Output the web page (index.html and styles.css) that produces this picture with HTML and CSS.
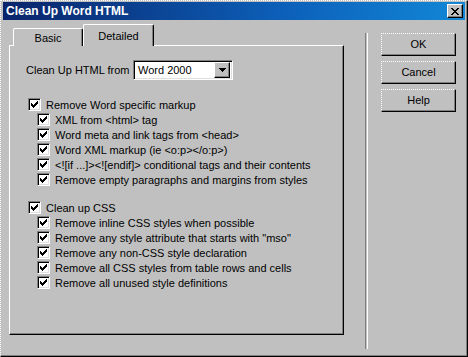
FILE: index.html
```html
<!DOCTYPE html>
<html>

<head>
    <title>Clean Up Word HTML</title>
    <link rel="stylesheet" href="styles.css">
</head>

<body>
    <div class="window">
        <div class="titlebar">
            <span class="title">Clean Up Word HTML</span>
            <span class="close raised">
                <svg width="8" height="7" viewBox="0 0 8 7" shape-rendering="crispEdges">
                    <path d="M0 0h2v1H0z M6 0h2v1H6z M1 1h2v1H1z M5 1h2v1H5z M2 2h4v1H2z M3 3h2v1H3z M2 4h4v1H2z M1 5h2v1H1z M5 5h2v1H5z M0 6h2v1H0z M6 6h2v1H6z" fill="#000"/>
                </svg>
            </span>
        </div>

        <div class="content">
            <div class="left">
                <div class="tabs">
                    <div class="tab">Basic</div>
                    <div class="tab active">Detailed</div>
                </div>
                <div class="panel">
                    <div class="from-row">
                        <span class="from-label">Clean Up HTML from</span>
                        <div class="select">
                            <span class="select-text">Word 2000</span>
                            <span class="select-btn raised">
                                <svg width="7" height="4" viewBox="0 0 7 4" shape-rendering="crispEdges">
                                    <path d="M0 0h7v1H0z M1 1h5v1H1z M2 2h3v1H2z M3 3h1v1H3z" fill="#000"/>
                                </svg>
                            </span>
                        </div>
                    </div>

                    <div class="group">
                        <label class="row"><span class="cb"></span>Remove Word specific markup</label>
                        <label class="row sub"><span class="cb"></span>XML from &lt;html&gt; tag</label>
                        <label class="row sub"><span class="cb"></span>Word meta and link tags from &lt;head&gt;</label>
                        <label class="row sub"><span class="cb"></span>Word XML markup (ie &lt;o:p&gt;&lt;/o:p&gt;)</label>
                        <label class="row sub"><span class="cb"></span>&lt;![if ...]&gt;&lt;![endif]&gt; conditional tags and their contents</label>
                        <label class="row sub"><span class="cb"></span>Remove empty paragraphs and margins from styles</label>
                    </div>

                    <div class="group second">
                        <label class="row"><span class="cb"></span>Clean up CSS</label>
                        <label class="row sub"><span class="cb"></span>Remove inline CSS styles when possible</label>
                        <label class="row sub"><span class="cb"></span>Remove any style attribute that starts with "mso"</label>
                        <label class="row sub"><span class="cb"></span>Remove any non-CSS style declaration</label>
                        <label class="row sub"><span class="cb"></span>Remove all CSS styles from table rows and cells</label>
                        <label class="row sub"><span class="cb"></span>Remove all unused style definitions</label>
                    </div>
                </div>
            </div>

            <div class="separator"></div>

            <div class="buttons">
                <div class="button">OK</div>
                <div class="button">Cancel</div>
                <div class="button">Help</div>
            </div>
        </div>
    </div>
</body>

</html>
```

FILE: styles.css
```css
body {
    margin: 0;
    font-family: "Liberation Sans", Arial, sans-serif;
    font-size: 11px;
    color: #000;
}

.window {
    width: 468px;
    height: 357px;
    box-sizing: border-box;
    background-color: #c0c0c0;
    border-top: 1px dotted #fff;
    border-left: 1px dotted #fff;
    border-right: 1px solid #000;
    border-bottom: 1px solid #000;
    box-shadow: inset -1px -1px #808080;
    padding: 1px 2px 0 2px;
}

.titlebar {
    height: 18px;
    display: flex;
    align-items: center;
    justify-content: space-between;
    padding: 0 2px 0 3px;
    background: linear-gradient(to right, #0a246a, #0c5fb8 60%, #1287d6);
}

.title {
    color: #fff;
    font-weight: bold;
    font-size: 12px;
}

.raised {
    box-sizing: border-box;
    display: flex;
    align-items: center;
    justify-content: center;
    background-color: #c0c0c0;
    border: 1px solid;
    border-color: #fff #000 #000 #fff;
    box-shadow: inset -1px -1px #808080;
}

.close {
    width: 16px;
    height: 14px;
}

.content {
    display: flex;
}

.left {
    margin-left: 6px;
    margin-top: 4px;
    width: 335px;
}

.tabs {
    display: flex;
    align-items: flex-end;
    height: 22px;
    margin-left: 4px;
    margin-bottom: -1px;
}

.tab {
    box-sizing: border-box;
    height: 18px;
    width: 70px;
    text-align: center;
    line-height: 19px;
    border-top: 1px solid #fff;
    border-left: 1px solid #fff;
    border-right: 1px solid #000;
    border-radius: 2px 2px 0 0;
    box-shadow: inset -1px 0 #808080;
    background-color: #c0c0c0;
}

.tab.active {
    height: 22px;
    width: 71px;
    line-height: 22px;
    position: relative;
    z-index: 1;
}

.panel {
    box-sizing: border-box;
    height: 290px;
    border: 1px solid;
    border-color: #fff #000 #000 #fff;
    box-shadow: inset -1px -1px #808080;
    padding: 14px 0 0 16px;
}

.from-row {
    display: flex;
    align-items: center;
    height: 20px;
}

.from-label {
    width: 107px;
}

.select {
    box-sizing: border-box;
    width: 100px;
    height: 20px;
    display: flex;
    align-items: center;
    justify-content: space-between;
    background-color: #fff;
    border: 1px solid;
    border-color: #808080 #fff #fff #808080;
    box-shadow: inset 1px 1px #000, inset -1px -1px #dfdfdf;
    padding: 2px 2px 2px 4px;
}

.select-btn {
    width: 16px;
    height: 16px;
}

.group {
    margin-top: 17px;
    margin-left: 2px;
}

.group.second {
    margin-top: 13px;
}

.row {
    display: flex;
    align-items: center;
    height: 15px;
    white-space: nowrap;
}

.row.sub {
    padding-left: 9px;
}

.cb {
    box-sizing: border-box;
    width: 13px;
    height: 13px;
    margin-right: 5px;
    flex: none;
    background-color: #fff;
    border: 1px solid;
    border-color: #808080 #fff #fff #808080;
    box-shadow: inset 1px 1px #000, inset -1px -1px #dfdfdf;
    background-image: url("data:image/svg+xml,%3Csvg xmlns='http://www.w3.org/2000/svg' width='7' height='7' shape-rendering='crispEdges'%3E%3Cpath d='M0 2h1v3H0z M1 3h1v3H1z M2 4h1v3H2z M3 3h1v3H3z M4 2h1v3H4z M5 1h1v3H5z M6 0h1v3H6z' fill='%23000'/%3E%3C/svg%3E");
    background-repeat: no-repeat;
    background-position: 2px 2px;
}

.separator {
    margin-left: 21px;
    margin-top: 13px;
    width: 1px;
    height: 316px;
    border-left: 1px solid #808080;
    border-right: 1px solid #fff;
}

.buttons {
    margin-left: 13px;
    margin-top: 13px;
    display: flex;
    flex-direction: column;
    gap: 5px;
}

.button {
    box-sizing: border-box;
    width: 75px;
    height: 23px;
    line-height: 21px;
    text-align: center;
    border: 1px solid;
    border-color: #fff #000 #000 #fff;
    border-top-style: dotted;
    border-left-style: dotted;
    box-shadow: inset -1px -1px #808080;
}
```
